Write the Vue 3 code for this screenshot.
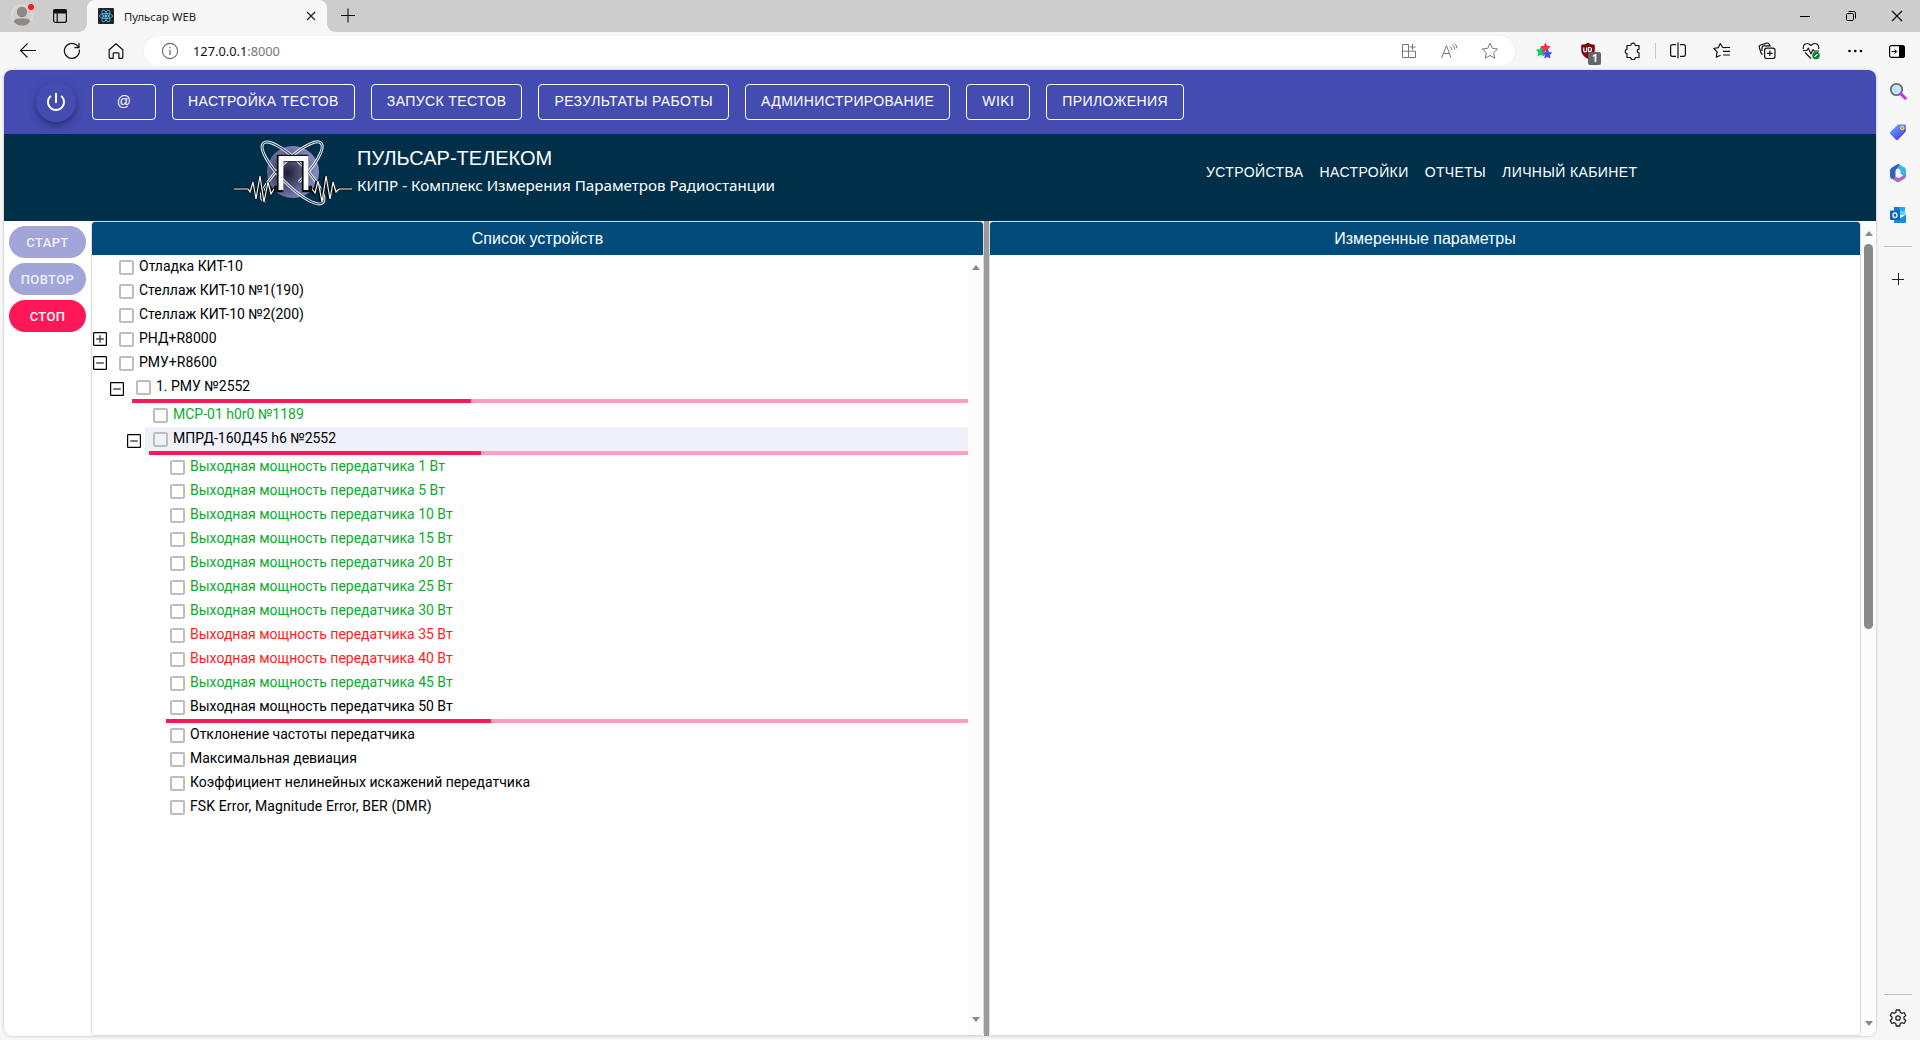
<script setup>
const menu = ['@', 'НАСТРОЙКА ТЕСТОВ', 'ЗАПУСК ТЕСТОВ', 'РЕЗУЛЬТАТЫ РАБОТЫ', 'АДМИНИСТРИРОВАНИЕ', 'WIKI', 'ПРИЛОЖЕНИЯ']
const links = ['УСТРОЙСТВА', 'НАСТРОЙКИ', 'ОТЧЕТЫ', 'ЛИЧНЫЙ КАБИНЕТ']
const power = (w, state) => ({ level: 3, text: `Выходная мощность передатчика ${w} Вт`, state })
const rows = [
  { level: 0, text: 'Отладка КИТ-10' },
  { level: 0, text: 'Стеллаж КИТ-10 №1(190)' },
  { level: 0, text: 'Стеллаж КИТ-10 №2(200)' },
  { level: 0, text: 'РНД+R8000', toggle: 'plus' },
  { level: 0, text: 'РМУ+R8600', toggle: 'minus' },
  { level: 1, text: '1. РМУ №2552', toggle: 'minus', progress: 40.5 },
  { level: 2, text: 'МСР-01 h0r0 №1189', state: 'ok' },
  { level: 2, text: 'МПРД-160Д45 h6 №2552', toggle: 'minus', progress: 40.5, state: 'active' },
  ...[1, 5, 10, 15, 20, 25, 30].map((w) => power(w, 'ok')),
  power(35, 'fail'),
  power(40, 'fail'),
  power(45, 'ok'),
  { ...power(50), progress: 40.5 },
  { level: 3, text: 'Отклонение частоты передатчика' },
  { level: 3, text: 'Максимальная девиация' },
  { level: 3, text: 'Коэффициент нелинейных искажений передатчика' },
  { level: 3, text: 'FSK Error, Magnitude Error, BER (DMR)', latin: true },
]
</script>

<template>
  <div class="browser">
    <div class="tabstrip">
      <svg class="profile" width="24" height="24" viewBox="0 0 24 24">
        <circle cx="11" cy="12.5" r="10.4" fill="#d3d0cc" stroke="#e4e2df" />
        <circle cx="11" cy="9" r="5.2" fill="#8d8985" />
        <path d="M2.6 18.6Q4 15.6 8 15.6h6q4 0 5.4 3a10.4 10.4 0 0 1-16.8 0z" fill="#8d8985" />
        <circle cx="20" cy="4" r="3.6" fill="#ee1c23" stroke="#f6dcdc" stroke-width=".8" />
      </svg>
      <svg class="workspaces" width="16" height="16" viewBox="0 0 16 16" fill="none" stroke="#111" stroke-width="1.2">
        <rect x="1.6" y="1.6" width="12.8" height="12.8" rx="2" />
        <path d="M2 2h12v3H2z" fill="#111" /><path d="M5.2 5v9" />
      </svg>
      <div class="tab">
        <svg width="16" height="16" viewBox="0 0 16 16" fill="none" stroke="#53c1de" stroke-width=".8">
          <rect width="16" height="16" rx="1" fill="#20232a" stroke="none" />
          <ellipse cx="8" cy="8" rx="6.6" ry="2.5" />
          <ellipse cx="8" cy="8" rx="6.6" ry="2.5" transform="rotate(60 8 8)" />
          <ellipse cx="8" cy="8" rx="6.6" ry="2.5" transform="rotate(120 8 8)" />
          <circle cx="8" cy="8" r="1.2" fill="#53c1de" />
        </svg>
        <span class="tab-title">Пульсар WEB</span>
        <svg class="tab-close" width="10" height="10" viewBox="0 0 10 10" stroke="#222" stroke-width="1.2"><path d="M1 1l8 8M9 1l-8 8" /></svg>
      </div>
      <svg class="newtab" width="16" height="16" viewBox="0 0 16 16" stroke="#111" stroke-width="1.1"><path d="M1 7.5h14M8 .5v14" /></svg>
      <div class="window-buttons">
        <svg width="12" height="12" viewBox="0 0 12 12" stroke="#000"><path d="M1 6.5h10" /></svg>
        <svg width="12" height="12" viewBox="0 0 12 12" fill="none" stroke="#000"><rect x="1.5" y="3.5" width="7" height="7" rx="1.3" /><path d="M3.5 1.5h5.2q1.8 0 1.8 1.8v5.2" /></svg>
        <svg width="12" height="12" viewBox="0 0 12 12" stroke="#000" stroke-width="1.1"><path d="M1 1l10 10M11 1L1 11" /></svg>
      </div>
    </div>

    <div class="toolbar">
      <div class="nav">
        <svg width="18" height="18" viewBox="0 0 18 18" fill="none" stroke="#111" stroke-width="1.1"><path d="M17 8.5H1.5M8.5 1.5l-7 7 7 7" /></svg>
        <svg width="18" height="18" viewBox="0 0 18 18" fill="none" stroke="#111" stroke-width="1.2"><path d="M16.3 7.6A7.5 7.5 0 1 1 13.6 3L16 5.4M16 1v4.6h-4.6" /></svg>
        <svg width="18" height="18" viewBox="0 0 18 18" fill="none" stroke="#111" stroke-width="1.2" stroke-linejoin="round"><path d="M2.2 7.8L9 1.8l6.8 6v7.7q0 .9-.9.9h-3v-4.8q0-.8-.8-.8H7q-.8 0-.8.8v4.8H3.1q-.9 0-.9-.9z" /></svg>
      </div>
      <div class="address">
        <svg width="18" height="18" viewBox="0 0 18 18" fill="none" stroke="#6b6b6b" stroke-width="1.1"><circle cx="9" cy="9" r="7.6" /><path d="M9 8v5M9 5v1.3" stroke-width="1.3" /></svg>
        <span class="url">127.0.0.1<i>:8000</i></span>
        <div class="address-icons">
          <svg width="16" height="16" viewBox="0 0 16 16" fill="none" stroke="#777"><path d="M7.5 1.5h-6v13h13v-6.3h-13M7.5 1.5v13M11.5 1v6M8.7 4h6" /></svg>
          <svg width="18" height="16" viewBox="0 0 18 16" fill="none" stroke="#777"><path d="M1.5 15L6.5 2.5 11 15M3.3 10.5h6M10 3.5q1.8 1.3 1.8 3.8M12 1.5q2.8 2 2.8 5M14 .2q3 2 3 5" /></svg>
          <svg width="18" height="18" viewBox="0 0 18 18" fill="none" stroke="#777" stroke-linejoin="round"><path d="M9 1.3l2.3 5 5.3.7-3.9 3.7 1 5.4L9 13.5l-4.7 2.6 1-5.4L1.4 7l5.3-.7z" /></svg>
        </div>
      </div>
      <div class="extensions">
        <span class="cell">
          <svg width="18" height="18" viewBox="0 0 18 18">
            <path id="s" d="M6 4l2 3.3 3.7.7L9 10.700l.3 3.800L6 12.700l-3.500 1.500.7-3.700L.8 7.800l3.700-.5z" fill="#14c96c" />
            <path d="M10.500.5l1.600 3.200 3.600.6-2.500 2.600.4 3.600-3.300-1.600L7 10.300l.6-3.500L5.200 4.200l3.600-.5z" fill="#f5334f" />
            <path d="M12.300 7l1.600 3 3.400.6-2.400 2.400.5 3.400-3.100-1.500-3 1.500.5-3.400L7.400 10.700l3.400-.6z" fill="#4a4ff0" />
          </svg>
        </span>
        <span class="cell ublock">
          <svg width="16" height="18" viewBox="0 0 16 18"><path d="M8 .8Q11 2.800 14.800 2.800V8q0 5.500-6.800 9Q1.200 13.500 1.200 8V2.800Q5 2.800 8 .8z" fill="#800610" /><path d="M3.800 5.500v3q0 1.300 1.400 1.300T6.600 8.500v-3M8.500 5.500v4h1a2 2 0 0 0 0-4z" fill="none" stroke="#fff" stroke-width="1.200" /></svg>
          <b>1</b>
        </span>
        <span class="cell">
          <svg width="18" height="18" viewBox="0 0 18 18" fill="none" stroke="#111" stroke-width="1.200" stroke-linejoin="round"><path d="M3 3.500h3.700a2.300 2.300 0 0 1 4.600 0H15v3.800a1.700 1.700 0 1 0 0 3.600v4.600h-3.700a2.300 2.300 0 0 1-4.600 0H3v-3.700a2.300 2.300 0 0 1 0-4.500z" /></svg>
        </span>
        <span class="divider"></span>
        <span class="cell">
          <svg width="18" height="18" viewBox="0 0 18 18" fill="none" stroke="#111" stroke-width="1.200"><path d="M7 2.600H3.500Q1.600 2.600 1.600 4.500v8q0 1.900 1.900 1.900H7M11 2.600h3.500q1.900 0 1.900 1.900v8q0 1.900-1.900 1.900H11M9 .5v16" /></svg>
        </span>
        <span class="cell">
          <svg width="18" height="18" viewBox="0 0 18 18" fill="none" stroke="#111" stroke-width="1.200" stroke-linejoin="round"><path d="M12.800 5.700L9.500 5.300 7.300 1.500 5.200 5.700.9 6.500l3.200 3.300-.8 5.400 4.300-2M10 9.300h7M12.800 5.500H17M10 13h7" /></svg>
        </span>
        <span class="cell">
          <svg width="18" height="18" viewBox="0 0 18 18" fill="none" stroke="#111" stroke-width="1.200"><rect x="6.600" y="6.100" width="10.400" height="10.400" rx="2.200" /><path d="M11.800 8.500v5.600M9 11.300h5.600M4.600 12.500Q3.400 12 3 10.700L1.300 5.400Q.8 3.700 2.500 3L8.800 1.100q1.700-.5 2.400 1.200l.5 1.500M4 9V5.600q0-1.800 1.800-1.800h7" /></svg>
        </span>
        <span class="cell">
          <svg width="18" height="18" viewBox="0 0 18 18" fill="none" stroke="#111" stroke-width="1.100" stroke-linejoin="round"><path d="M1.500 7Q.5 3.500 3.200 2q3-1.500 5.800 1.500Q11.800.5 14.800 2q2.700 1.500 1.700 5M.8 8.500h4L6.300 6l2.700 6 2-4.500 1 1.500h5M3 10.500l6 6" /><circle cx="14" cy="13.500" r="3.800" fill="#14802c" stroke="none" /><path d="M12.500 14.800l3-2.700" stroke="#fff" /></svg>
        </span>
        <span class="cell">
          <svg width="16" height="4" viewBox="0 0 16 4"><circle cx="2.500" cy="2" r="1.300" /><circle cx="8.300" cy="2" r="1.300" /><circle cx="14" cy="2" r="1.300" /></svg>
        </span>
        <span class="cell last">
          <svg width="16" height="13" viewBox="0 0 16 13"><rect x=".6" y=".6" width="14.800" height="11.800" rx="2" fill="#fff" stroke="#000" stroke-width="1.200" /><path d="M10 .6h3.500q2 0 2 2v7.800q0 2-2 2H10z" /><path d="M2.500 6.500h5M5.500 4.300l2.200 2.200-2.200 2.200" fill="none" stroke="#000" /></svg>
        </span>
      </div>
    </div>

    <div class="body">
      <div class="page">
        <div class="appbar">
          <div class="power">
            <svg width="24" height="24" viewBox="0 0 24 24" fill="#fff"><path d="M13 3h-2v10h2V3zm4.830 2.170l-1.420 1.420C17.990 7.860 19 9.810 19 12c0 3.870-3.130 7-7 7s-7-3.130-7-7c0-2.190 1.010-4.140 2.580-5.420L6.170 5.170C4.230 6.820 3 9.260 3 12c0 4.970 4.030 9 9 9s9-4.030 9-9c0-2.740-1.230-5.180-3.170-6.830z" /></svg>
          </div>
          <button v-for="m in menu" :key="m" class="menu-button">{{ m }}</button>
        </div>

        <header class="header">
          <svg class="logo" width="120" height="70" viewBox="0 0 120 70">
            <defs>
              <radialGradient id="globe" cx=".38" cy=".52" r=".68">
                <stop offset="0" stop-color="#1d1a30" /><stop offset=".35" stop-color="#4d4a70" />
                <stop offset=".75" stop-color="#7d7fb4" /><stop offset="1" stop-color="#9093c8" />
              </radialGradient>
            </defs>
            <circle cx="60" cy="36" r="26" fill="url(#globe)" />
            <g fill="none">
              <g stroke="#e6eef4" stroke-width="3">
                <ellipse cx="60" cy="37" rx="42" ry="12" transform="rotate(45 60 37)" />
                <path d="M33 65A42 12 -45 0 1 28.500 58A42 12 -45 0 1 88 7A42 12 -45 0 1 66 46" />
              </g>
              <g stroke="#24485f" stroke-width="1">
                <ellipse cx="60" cy="37" rx="42" ry="12" transform="rotate(45 60 37)" />
                <path d="M33 65A42 12 -45 0 1 28.500 58A42 12 -45 0 1 88 7A42 12 -45 0 1 66 46" />
              </g>
              <path d="M1 53h14l2 3 3-10 3 17 4-23 4 26 4-20 3 12 3-5h7V24h23v29h7l3 4 3-12 4 21 4-26 4 23 3-17 3 10 3-3h13" stroke="#001018" stroke-width="3" />
              <path d="M1 53h14l2 3 3-10 3 17 4-23 4 26 4-20 3 12 3-5h4M75 53h4l3 4 3-12 4 21 4-26 4 23 3-17 3 10 3-3h13" stroke="#fff3ec" stroke-width="1.200" />
              <path d="M41 53h6V22h25v31h7" stroke="#111" stroke-width="6.500" />
              <path d="M48 54V22.500h25V54" stroke="#fff" stroke-width="4.800" />
            </g>
          </svg>
          <div class="brand">
            <div class="brand-title">ПУЛЬСАР-ТЕЛЕКОМ</div>
            <div class="brand-sub">КИПР - Комплекс Измерения Параметров Радиостанции</div>
          </div>
          <nav class="links"><a v-for="l in links" :key="l">{{ l }}</a></nav>
        </header>

        <main class="main">
          <div class="actions">
            <button class="pill">СТАРТ</button>
            <button class="pill">ПОВТОР</button>
            <button class="pill stop">СТОП</button>
          </div>
          <section class="panel devices">
            <h2>Список устройств</h2>
            <div class="panel-body">
              <div class="tree">
                <div v-for="r in rows" :key="r.text" class="row" :class="'level-' + r.level">
                  <span class="toggle-slot">
                    <svg v-if="r.toggle" width="14" height="14" viewBox="0 0 14 14" fill="none">
                      <rect x=".6" y=".6" width="12.800" height="12.800" rx=".6" stroke="#000" stroke-width="1.200" />
                      <path :d="r.toggle === 'plus' ? 'M3.200 7h7.600M7 3.200v7.600' : 'M3.200 7h7.600'" stroke="#444" stroke-width="1.400" />
                    </svg>
                  </span>
                  <div class="item" :class="r.state">
                    <label :class="{ latin: r.latin }"><span class="check"></span>{{ r.text }}</label>
                    <div v-if="r.progress" class="bar"><div :style="{ width: r.progress + '%' }"></div></div>
                  </div>
                </div>
              </div>
              <div class="scroll"><i class="up"></i><i class="down"></i></div>
            </div>
          </section>
          <div class="splitter"></div>
          <section class="panel params"><h2>Измеренные параметры</h2></section>
          <div class="scroll outer"><i class="up"></i><div class="thumb"></div><i class="down"></i></div>
        </main>
      </div>

      <aside class="sidebar">
        <svg width="18" height="18" viewBox="0 0 18 18"><circle cx="7.500" cy="7.500" r="5.700" fill="#c5e6fa" stroke="#666d73" stroke-width="1.800" /><path d="M12 12l4.300 4.300" stroke="#c22df0" stroke-width="3" stroke-linecap="round" /></svg>
        <svg width="18" height="18" viewBox="0 0 18 18"><defs><linearGradient id="tag" x1="0" y1="0" x2=".8" y2="1"><stop offset="0" stop-color="#6bb8ff" /><stop offset="1" stop-color="#4b32ea" /></linearGradient></defs><path d="M9 1.500h6.500q1.300 0 1.300 1.300V8.500L9 16.700q-1 .8-2 0L1.300 11q-.8-1 0-2z" fill="url(#tag)" /><circle cx="13.200" cy="5" r="1.800" fill="#bf9b50" stroke="#ffe26a" /></svg>
        <svg width="18" height="20" viewBox="0 0 18 20"><path d="M8 1.500L2.500 4.800Q1 5.700 1 7.500v6q0 1.600 1.500 2.300 3 .9 4-1.300V8q0-1.500 1.700-2.500L12 3.200 10.500 1.600Q9.300.7 8 1.500z" fill="#3b5fc0" /><path d="M10.500 1.500l5 3Q17 5.500 17 7v5q-1 1.300-3 .3l-2.500-1.500V7.500Q11 6 8.500 5.500z" fill="#35b8ea" /><path d="M17 10v3.500q0 1.500-1.500 2.300l-5 3q-1.500.8-3 0l-5-3q4 1.300 4-2.300l2 1.200q1.300.5 2.500-.3l4-2.600q1.500-.8 2-1.800z" fill="#a66bc8" /></svg>
        <svg width="18" height="18" viewBox="0 0 18 18"><path d="M5 1h11v8H5z" fill="#28a8ea" /><path d="M5 1h5.500v4H5z" fill="#0f78d0" /><path d="M10.500 5H16v4h-5.500z" fill="#50d9ff" /><path d="M5 9l6 3.500L17 8.500V16q0 1-1 1H5z" fill="#128de0" /><rect x="1" y="4.500" width="10" height="9.500" rx="1" fill="#0669b7" /><ellipse cx="6" cy="9.200" rx="2" ry="2.400" fill="none" stroke="#fff" stroke-width="1.300" /></svg>
        <hr />
        <svg class="add" width="14" height="14" viewBox="0 0 14 14" stroke="#222"><path d="M1 7.500h12M7.500 1v12" /></svg>
        <span class="grow"></span>
        <hr />
        <svg class="gear" width="18" height="18" viewBox="0 0 18 18" fill="none" stroke="#222" stroke-width="1.300" stroke-linejoin="round"><path d="M7.300 1h3.400l.5 2.400 1.500.9 2.400-.8 1.700 3L15 8.100v1.800l1.800 1.600-1.700 3-2.400-.8-1.500.9-.5 2.400H7.300l-.5-2.400-1.500-.9-2.400.8-1.700-3L3 9.900V8.100L1.200 6.500l1.700-3 2.400.8 1.500-.9z" /><circle cx="9" cy="9" r="2.200" /></svg>
      </aside>
    </div>
  </div>
</template>

<style>
html, body { margin: 0; overflow: hidden; }
</style>

<style scoped>
* { box-sizing: border-box; }
svg { display: block; flex: none; }
button { margin: 0; cursor: pointer; white-space: nowrap; }

.browser { width: 1920px; height: 1040px; display: flex; flex-direction: column; background: #f7f7f7; font-family: "Liberation Sans", sans-serif; }

.tabstrip { height: 32px; flex: none; display: flex; align-items: center; background: #cdcdcd; }
.profile { margin: 0 0 0 11px; transform: translateY(-1px); }
.workspaces { margin-left: 17px; }
.tab { position: relative; width: 240px; height: 32px; margin-left: 19px; padding: 0 11px; display: flex; align-items: center; background: #f7f7f7; border-radius: 8px 8px 0 0; }
.tab::before, .tab::after { content: ""; position: absolute; bottom: 0; width: 8px; height: 8px; }
.tab::before { left: -8px; background: radial-gradient(circle at 0 0, #cdcdcd 7.500px, #f7f7f7 8px); }
.tab::after { right: -8px; background: radial-gradient(circle at 100% 0, #cdcdcd 7.500px, #f7f7f7 8px); }
.tab-title { flex: 1; margin-left: 10px; font: 11.300px "Noto Sans", sans-serif; color: #222; }
.newtab { margin-left: 13px; }
.window-buttons { margin-left: auto; margin-right: 17px; display: flex; gap: 34px; }

.toolbar { height: 38px; flex: none; display: flex; align-items: center; }
.nav { width: 144px; padding-left: 19px; display: flex; gap: 26px; }
.address { width: 1371px; height: 30px; padding: 0 16px 0 17px; border-radius: 15px; background: #fff; display: flex; align-items: center; box-shadow: 0 0 2px #e6e6e6; }
.url { margin-left: 14px; font: 12.800px "Noto Sans", sans-serif; color: #111; }
.url i { font-style: normal; color: #767676; }
.address-icons { margin-left: auto; display: flex; align-items: center; gap: 23px; }
.extensions { margin-left: 7px; display: flex; align-items: center; }
.cell { width: 44.300px; display: flex; justify-content: center; }
.cell.last { width: 40px; }
.ublock { position: relative; }
.ublock b { position: absolute; left: 22px; top: 10px; width: 13px; height: 13px; border-radius: 2px; background: #666; color: #fff; font: bold 10px/13px "Noto Sans", sans-serif; text-align: center; }
.divider { width: 1px; height: 16px; background: #c8c8c8; }

.body { flex: 1; min-height: 0; display: flex; padding: 0 0 4px 4px; }
.page { width: 1872px; display: flex; flex-direction: column; background: #fff; border-radius: 8px; overflow: hidden; box-shadow: 0 0 3px rgba(0, 0, 0, .25); }

.appbar { height: 64px; flex: none; display: flex; align-items: center; padding-left: 32px; background: #444cb2; }
.power { width: 40px; height: 40px; border-radius: 50%; display: flex; align-items: center; justify-content: center; background: #444cb2; box-shadow: 0 3px 5px -1px rgba(0, 0, 0, .2), 0 5px 9px rgba(0, 0, 0, .17), 0 1px 12px rgba(0, 0, 0, .08); }
.menu-button { height: 36px; min-width: 64px; margin-left: 16px; padding: 0 15px 2px; border: 1px solid #fff; border-radius: 4px; background: none; color: #fff; font: 14px/24px "Liberation Sans", sans-serif; letter-spacing: .4px; }

.header { height: 87px; flex: none; display: flex; background: #003049; color: #fff; }
.logo { margin: 2px 0 0 229px; }
.brand { width: 500px; padding-top: 12px; margin-left: 4px; }
.brand-title { font-size: 20px; line-height: 24px; }
.brand-sub { margin-top: 4px; font: 15.200px/23px "Noto Sans", sans-serif; white-space: nowrap; }
.links { display: flex; gap: 16px; margin-left: 349px; height: 76px; align-items: center; font-size: 14px; letter-spacing: .4px; }

.main { flex: 1; min-height: 0; display: flex; }
.actions { width: 87px; padding: 5px 5px 0; display: flex; flex-direction: column; gap: 5px; }
.pill { height: 32px; border: 0; border-radius: 16px; background: #a2a5d8; color: #f0f0fa; font: 500 13px Roboto, sans-serif; letter-spacing: .37px; padding: 0; }
.stop { background: #ff1758; color: #fff; }
.panel { display: flex; flex-direction: column; border: 1px solid #dcdcdc; border-radius: 4px 4px 3px 3px; overflow: hidden; margin-bottom: 0; }
.devices { width: 893px; }
.params { width: 872px; }
.panel h2 { flex: none; height: 33px; margin: 0; background: #004b7a; color: #fff; font: 16px/33px "Liberation Sans", sans-serif; text-align: center; }
.splitter { width: 5px; background: #9a9a9a; }

.panel-body { flex: 1; min-height: 0; display: flex; }
.tree { flex: 1; min-width: 0; }
.row { display: flex; align-items: center; }
.level-1 { padding-left: 17px; }
.level-2 { padding-left: 34px; }
.level-3 { padding-left: 51px; }
.toggle-slot { width: 19px; flex: none; padding-left: 1px; }
.item { flex: 1; padding-left: 4px; font: 14px/22px Roboto, sans-serif; color: #000; }
.item label { display: flex; align-items: center; height: 24px; padding: 0 0 2px 4px; white-space: nowrap; }
.item label.latin { letter-spacing: .11px; }
.check { width: 15px; height: 15px; margin-right: 5px; border: 1.500px solid #bdbdbd; border-width: 2px; border-radius: 2px; flex: none; transform: translateY(1px); }
.ok { color: #0eaa2e; }
.fail { color: #ff1d1d; }
.active { background: #f0f0fa; }
.bar { height: 4px; background: #ff9fbf; }
.bar div { height: 4px; background: #ff1758; }

.scroll { width: 15px; flex: none; background: #fcfcfc; display: flex; flex-direction: column; align-items: center; justify-content: space-between; padding: 10px 0 13px; }
.up, .down { width: 0; height: 0; border: 4.500px solid transparent; }
.up { border-top: 0; border-bottom: 5px solid #8a8a8a; }
.down { border-bottom: 0; border-top: 5px solid #8a8a8a; margin-top: auto; }
.outer { padding: 10px 0 10px; }
.thumb { width: 9px; height: 385px; margin-top: 8px; border-radius: 5px; background: #8a8a8a; }

.sidebar { width: 44px; display: flex; flex-direction: column; align-items: center; padding-top: 12px; }
.sidebar svg { margin-bottom: 22.500px; }
.sidebar hr { width: 28px; height: 1px; border: 0; margin: 0; background: #bdbdbd; flex: none; }
.sidebar .add { margin: 25px 0 0; }
.sidebar .gear { margin: 14px 0 9px; }
.grow { flex: 1; }
</style>
